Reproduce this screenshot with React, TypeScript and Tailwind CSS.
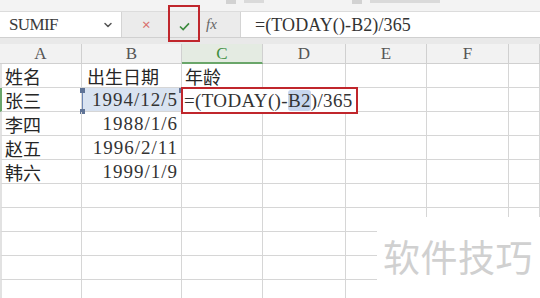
import { ChevronDown } from "lucide-react";

// grid widths taken from the sheet columns A..G
const cols = "grid grid-cols-[82px_100px_81px_83px_81px_82px_1fr]";
const serif = "[font-family:'Liberation_Serif',serif]";
const cjk = "[font-family:'Noto_Sans_CJK_SC',sans-serif]";

const headers = ["A", "B", "C", "D", "E", "F", ""];

const data = [
  ["姓名", "出生日期", "年龄"],
  ["张三", "1994/12/5", ""],
  ["李四", "1988/1/6", ""],
  ["赵五", "1996/2/11", ""],
  ["韩六", "1999/1/9", ""],
  ["", "", ""],
  ["", "", ""],
  ["", "", ""],
  ["", "", ""],
  ["", "", ""],
];

const cellClass = "h-[24px] border-r border-b border-[#d6d6d6] relative leading-none";

const Handle = ({ pos }: { pos: string }) => (
  <span className={`absolute w-[5px] h-[5px] bg-[#5f7396] ${pos}`} />
);

const FormulaBar = () => (
  <div className="flex h-[26px] bg-[#ebebeb] border-b border-[#d0d0d0]">
    <div className="w-[122px] bg-white flex items-center justify-between pl-[9px] pr-[7px] border-r border-[#d4d4d4]">
      <span className={`${serif} text-[17px] leading-none text-[#3a3a3a] tracking-[-0.6px]`}>SUMIF</span>
      <ChevronDown className="w-3 h-3 text-[#555]" strokeWidth={3} />
    </div>
    <div className="w-[118px] flex items-center relative">
      <span className="absolute left-[20px] text-[15px] text-[#d9706e] leading-none">×</span>
      <div className="absolute left-[46px] -top-[7px] w-[32px] h-[37px] border-2 border-[#c0262c] flex items-center justify-center pt-[5px]">
        <svg viewBox="0 0 12 10" className="w-[11px] h-[9px]">
          <path d="M1 5 L4.5 8.5 L11 1.5" fill="none" stroke="#3c8a3e" strokeWidth="1.8" />
        </svg>
      </div>
      <span className={`absolute left-[84px] ${serif} italic text-[15px] leading-none text-[#666]`}>fx</span>
    </div>
    <div className="flex-1 bg-white flex items-center pl-[14px] border-l border-[#d4d4d4]">
      <span className={`${serif} text-[18px] leading-none text-[#333] tracking-[0.1px] whitespace-nowrap`}>
        =(TODAY()-B2)/365
      </span>
    </div>
  </div>
);

export default function App() {
  return (
    <div className="w-[540px] h-[298px] overflow-hidden bg-white relative">
      {/* cut-off ribbon above the formula bar */}
      <div className="h-[12px] bg-[#f3f3f3] border-b border-[#dcdcdc] flex items-start gap-2 pl-[226px]">
        <span className="w-[10px] h-[4px] bg-[#d2d2d2]" />
        <span className="w-[20px] h-[3px] bg-[#dadada]" />
        <span className="ml-[80px] w-[10px] h-[4px] bg-[#d2d2d2]" />
        <span className="w-[70px] h-[3px] bg-[#dadada]" />
      </div>
      <FormulaBar />
      <div className="h-[6px] bg-[#e9e9e9]" />

      {/* column headers */}
      <div className={`${cols} h-[20px] bg-[#f2f2f2]`}>
        {headers.map((h, i) => (
          <div
            key={i}
            className={
              h === "C"
                ? `flex items-center justify-center leading-none border-r border-[#d0d0d0] bg-[#e4ebe2] border-b-2 border-b-[#6aa66a] ${serif} text-[17px] text-[#3f8f3f]`
                : `flex items-center justify-center leading-none border-r border-b border-[#d0d0d0] ${serif} text-[17px] text-[#555]`
            }
          >
            {h}
          </div>
        ))}
      </div>

      {/* sheet body */}
      {data.map((r, ri) => (
        <div key={ri} className={cols}>
          <div
            className={`${cellClass} flex items-center pl-[3px] ${cjk} text-[18px] text-[#262626] border-l-2 ${
              ri === 1 ? "border-l-[#6aa66a]" : "border-l-[#e2e2e2]"
            }`}
          >
            {r[0]}
          </div>
          {ri === 1 ? (
            <div className={`${cellClass} bg-[#d9e3f1] border-l border-l-[#7088b5] flex items-center justify-end pr-[3px]`}>
              <span className={`${serif} text-[19px] text-[#333] tracking-[1px]`}>{r[1]}</span>
              <Handle pos="-left-[3px] top-[0px]" />
              <Handle pos="-left-[3px] -bottom-[3px]" />
              <Handle pos="-right-[3px] top-[0px]" />
            </div>
          ) : ri === 0 ? (
            <div className={`${cellClass} flex items-center pl-[5px] ${cjk} text-[18px] text-[#262626]`}>{r[1]}</div>
          ) : (
            <div className={`${cellClass} flex items-center justify-end pr-[3px]`}>
              <span className={`${serif} text-[19px] text-[#333] tracking-[1px]`}>{r[1]}</span>
            </div>
          )}
          <div className={`${cellClass} flex items-center pl-[3px] ${cjk} text-[18px] text-[#262626]`}>
            {r[2]}
            {ri === 1 && (
              <div className="absolute -left-[1px] -top-[1px] w-[177px] h-[27px] border-2 border-[#c0262c] bg-white z-10 flex items-center pl-[1px]">
                <span className={`${serif} text-[19px] leading-none text-[#333] tracking-[0.35px] whitespace-nowrap`}>
                  =(TODAY()-<span className="bg-[#c8d6ee] rounded-[3px]">B2</span>)/365
                </span>
              </div>
            )}
          </div>
          <div className={cellClass} />
          <div className={cellClass} />
          <div className={cellClass} />
          <div className={cellClass} />
        </div>
      ))}

      {/* site watermark */}
      <div className="absolute left-[377px] top-[217px] right-0 bottom-0 bg-white flex items-start pl-[6px] pt-[21px]">
        <span className={`${cjk} text-[37px] leading-none text-[#d0d0d0] tracking-[0.5px]`}>软件技巧</span>
      </div>
    </div>
  );
}
